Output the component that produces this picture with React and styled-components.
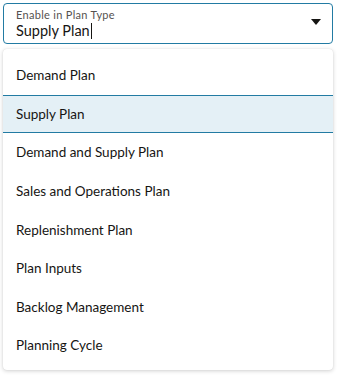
import React from "react";
import styled, { createGlobalStyle } from "styled-components";

const Global = createGlobalStyle`
  html, body {
    margin: 0;
    padding: 0;
    background: #ffffff;
    font-family: Lato, "Noto Sans", sans-serif;
    color: #1f1f1f;
  }
`;

const Page = styled.div`
  width: 338px;
  height: 376px;
  padding: 3px 5px 0 3px;
  box-sizing: border-box;
  display: flex;
  flex-direction: column;
  gap: 5px;
`;

const Field = styled.div`
  height: 41px;
  box-sizing: border-box;
  border: 1.5px solid #227ba3;
  border-radius: 4px;
  display: flex;
  align-items: center;
  padding: 0 11px 0 12px;
`;

const FieldText = styled.div`
  flex: 1;
  display: flex;
  flex-direction: column;
  gap: 2px;
`;

const Label = styled.div`
  font-size: 11px;
  line-height: 12px;
  letter-spacing: 0.3px;
  color: #555250;
  margin-top: 1px;
`;

const Value = styled.div`
  font-size: 14.5px;
  line-height: 16px;
  color: #161513;
  display: flex;
  align-items: center;
`;

const Cursor = styled.span`
  display: inline-block;
  width: 1px;
  height: 16px;
  background: #161513;
  margin-left: 1px;
`;

const Caret = styled.svg`
  width: 10px;
  height: 6px;
  margin-top: -4px;
`;

const Menu = styled.ul`
  list-style: none;
  margin: 0;
  padding: 7px 0 5px;
  background: #fff;
  border-radius: 4px;
  box-shadow: 0 1px 4px rgba(0, 0, 0, 0.18), 0 0 1px rgba(0, 0, 0, 0.12);
`;

const Item = styled.li`
  height: 38.6px;
  box-sizing: border-box;
  display: flex;
  align-items: center;
  padding: 0 13px;
  font-size: 13.5px;
  color: #161513;
  background: ${p => (p.$selected ? "#e4f0f6" : "transparent")};
  border-top: 1px solid ${p => (p.$selected ? "#227ba3" : "transparent")};
  border-bottom: 1px solid ${p => (p.$selected ? "#227ba3" : "transparent")};
`;

const options = [
  "Demand Plan",
  "Supply Plan",
  "Demand and Supply Plan",
  "Sales and Operations Plan",
  "Replenishment Plan",
  "Plan Inputs",
  "Backlog Management",
  "Planning Cycle",
];

export default function App() {
  return (
    <Page>
      <Global />
      <Field>
        <FieldText>
          <Label>Enable in Plan Type</Label>
          <Value>
            Supply Plan
            <Cursor />
          </Value>
        </FieldText>
        <Caret viewBox="0 0 10 6">
          <path d="M0 0 L10 0 L5 6 Z" fill="#161513" />
        </Caret>
      </Field>
      <Menu>
        {options.map(o => (
          <Item key={o} $selected={o === "Supply Plan"}>
            {o}
          </Item>
        ))}
      </Menu>
    </Page>
  );
}
